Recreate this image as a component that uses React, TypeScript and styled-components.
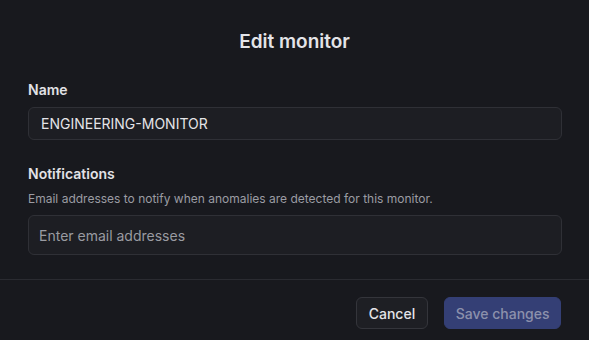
import React from "react";
import styled, { createGlobalStyle } from "styled-components";

const GlobalStyle = createGlobalStyle`
  html, body {
    margin: 0;
    padding: 0;
    background: #18191e;
  }
  body {
    font-family: Inter, "Noto Sans", sans-serif;
    -webkit-font-smoothing: antialiased;
  }
  * {
    box-sizing: border-box;
  }
`;

const App = () => {
  return (
    <>
      <GlobalStyle />
      <Dialog>
        <Title>Edit monitor</Title>
        <Body>
          <Field>
            <Label htmlFor="name">Name</Label>
            <Input id="name" defaultValue="ENGINEERING-MONITOR" $height={33} $pad={12} />
          </Field>
          <Field $top={24}>
            <Label htmlFor="emails">Notifications</Label>
            <Hint>Email addresses to notify when anomalies are detected for this monitor.</Hint>
            <Input id="emails" placeholder="Enter email addresses" $height={40} $pad={10} />
          </Field>
        </Body>
        <Footer>
          <Button type="button">Cancel</Button>
          <Button type="button" $primary>Save changes</Button>
        </Footer>
      </Dialog>
    </>
  );
};

export default App;

const Dialog = styled.div`
  width: 589px;
  height: 340px;
  display: flex;
  flex-direction: column;
  background: #18191e;
  overflow: hidden;
`;

const Title = styled.h2`
  margin: 0;
  padding-top: 28px;
  font-size: 19px;
  line-height: 28px;
  font-weight: 600;
  color: #e4e4e8;
  text-align: center;
`;

const Body = styled.div`
  display: flex;
  flex-direction: column;
  padding: 24px 27px 24px 28px;
  border-bottom: 1px solid #2a2b31;
`;

const Field = styled.div<{ $top?: number }>`
  display: flex;
  flex-direction: column;
  margin-top: ${({ $top }) => $top || 0}px;
`;

const Label = styled.label`
  font-size: 14px;
  line-height: 20px;
  font-weight: 600;
  color: #e2e2e6;
  margin-bottom: 7px;
`;

const Hint = styled.p`
  margin: 0 0 8px 0;
  font-size: 12px;
  line-height: 16px;
  color: #9b9ca3;
`;

const Input = styled.input<{ $height: number; $pad: number }>`
  width: 100%;
  height: ${({ $height }) => $height}px;
  padding: 0 ${({ $pad }) => $pad}px;
  border: 1px solid #2f3036;
  border-radius: 6px;
  background: #1d1e23;
  color: #e4e4e8;
  font-family: Inter, "Noto Sans", sans-serif;
  font-size: 14px;
  outline: none;

  &::placeholder {
    color: #9a9ba1;
  }
`;

const Footer = styled.div`
  display: flex;
  justify-content: flex-end;
  gap: 16px;
  padding: 17px 28px 0 28px;
`;

const Button = styled.button<{ $primary?: boolean }>`
  height: 32px;
  padding: 0 ${({ $primary }) => ($primary ? "10.5px" : "12px")};
  border-radius: 6px;
  font-family: Inter, "Noto Sans", sans-serif;
  font-size: 14px;
  font-weight: 500;
  cursor: pointer;
  border: 1px solid ${({ $primary }) => ($primary ? "#343f75" : "#34353b")};
  background: ${({ $primary }) => ($primary ? "#343f75" : "#1e1f24")};
  color: ${({ $primary }) => ($primary ? "#8c91ac" : "#e4e4e8")};
`;
